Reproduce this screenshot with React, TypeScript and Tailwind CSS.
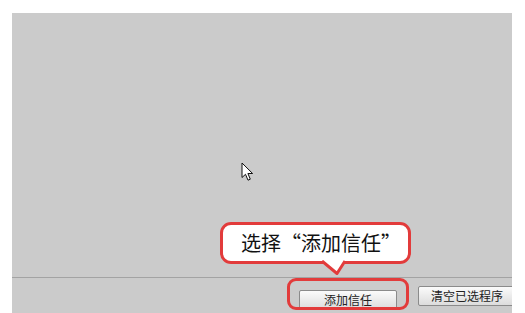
import React from 'react';

const font = { fontFamily: '"Noto Sans CJK SC", "Noto Sans", sans-serif' };

const Cursor = () => (
  <svg width="14" height="20" viewBox="0 0 14 20" className="absolute left-[229px] top-[149px]">
    <path
      d="M1 1 L1 15.5 L4.5 12.3 L7 18.2 L9.3 17.2 L6.9 11.5 L11.6 11.5 Z"
      fill="#fff"
      stroke="#111"
      strokeWidth="1"
      strokeLinejoin="round"
    />
  </svg>
);

const Callout = () => (
  <div className="absolute left-[208px] top-[209px]">
    <div className="relative z-10 w-[191px] h-[42px] rounded-[11px] border-[3px] border-[#e23b3b] bg-white flex items-center pl-[18px] text-[20px] text-[#111] leading-none">
      选择“添加信任”
    </div>
    <svg width="30" height="18" viewBox="0 0 30 18" className="absolute left-[100px] top-[38px] z-20">
      <path d="M2 0 L17 13 L25 0" fill="#fff" />
      <path d="M2 1 L17 13.5 L25 1" fill="none" stroke="#e23b3b" strokeWidth="3" strokeLinejoin="round" />
    </svg>
  </div>
);

const Btn = ({ label }: { label: string }) => (
  <button className="w-[98px] h-[20px] shrink-0 rounded-[2px] border border-[#8b8b8b] bg-gradient-to-b from-[#fbfbfb] to-[#dcdcdc] text-[12px] text-[#222] leading-none">
    {label}
  </button>
);

export default function App() {
  return (
    <div className="w-[525px] h-[313px] bg-white pt-[13px] pl-[12px] overflow-hidden" style={font}>
      <div className="relative w-[500px] h-[300px] bg-[#cbcbcb] flex flex-col overflow-hidden">
        <div className="h-[264px]" />
        <div className="h-px bg-[#a3a3a3]" />
        <div className="flex-1 flex items-start pt-[8px] pl-[287px] gap-[21px]">
          <div className="relative">
            <div className="absolute -left-[12px] -top-[8px] w-[122px] h-[32px] rounded-[9px] border-[3px] border-[#e23b3b]" />
            <Btn label="添加信任" />
          </div>
          <Btn label="清空已选程序" />
        </div>
        <Cursor />
        <Callout />
      </div>
    </div>
  );
}
